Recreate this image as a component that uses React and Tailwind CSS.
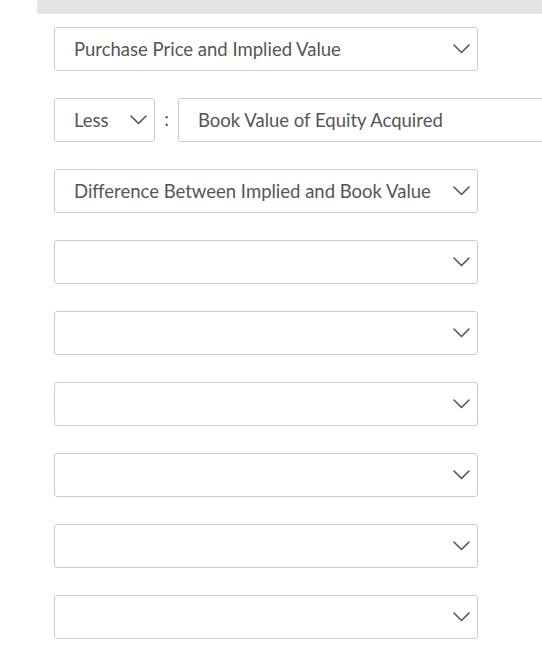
import React from "react";

function Chevron() {
  return (
    <svg width="17" height="10" viewBox="0 0 17 10" fill="none" className="shrink-0">
      <path d="M1 1 L8.5 8.5 L16 1" stroke="#555" strokeWidth="1.6" strokeLinecap="round" strokeLinejoin="round" />
    </svg>
  );
}

function Select({ text, className = "" }) {
  return (
    <div className={`h-[44px] shrink-0 border border-[#cccccc] rounded-[3px] bg-white flex items-center justify-between pl-[19px] pr-[7px] ${className}`}>
      <span className="text-[18.5px] text-[#555555] whitespace-nowrap pt-[1px]">{text}</span>
      <Chevron />
    </div>
  );
}

export default function App() {
  return (
    <div className="w-[542px] h-[666px] overflow-hidden bg-white" style={{ fontFamily: "Lato, 'Open Sans', sans-serif" }}>
      <div className="ml-[37px] h-[14px] bg-[#e4e4e4]" />
      <div className="pl-[54px] pt-[13px] flex flex-col gap-[27px]">
        <Select text="Purchase Price and Implied Value" className="w-[424px]" />
        <div className="flex items-center">
          <Select text="Less" className="w-[101px]" />
          <span className="w-[23px] shrink-0 text-center text-[18.5px] text-[#555555]">:</span>
          <div className="h-[44px] w-[424px] shrink-0 border border-[#cccccc] rounded-[3px] bg-white flex items-center pl-[19px]">
            <span className="text-[18.5px] text-[#555555] whitespace-nowrap pt-[1px]">Book Value of Equity Acquired</span>
          </div>
        </div>
        <Select text="Difference Between Implied and Book Value" className="w-[424px]" />
        <Select text="" className="w-[424px]" />
        <Select text="" className="w-[424px]" />
        <Select text="" className="w-[424px]" />
        <Select text="" className="w-[424px]" />
        <Select text="" className="w-[424px]" />
        <Select text="" className="w-[424px]" />
      </div>
    </div>
  );
}
